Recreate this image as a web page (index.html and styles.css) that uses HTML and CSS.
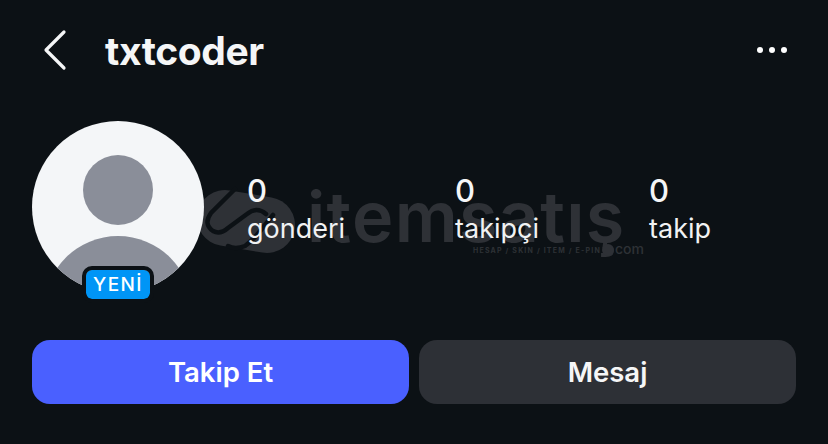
FILE: index.html
```html
<!DOCTYPE html>
<html>
  <head>
    <title>txtcoder</title>
    <link rel="stylesheet" href="styles.css">
  </head>
  <body>
    <div class="page">
      <header class="topbar">
        <svg class="back" width="24" height="42" viewBox="0 0 24 42">
          <path d="M21 3 L3 21 L21 39" fill="none" stroke="#f5f6f7" stroke-width="3.2" stroke-linecap="round" stroke-linejoin="round" />
        </svg>
        <h1 class="username">txtcoder</h1>
        <div class="more">
          <span class="dot"></span>
          <span class="dot"></span>
          <span class="dot"></span>
        </div>
      </header>

      <section class="profile">
        <div class="avatar">
          <svg class="avatar-pic" width="172" height="172" viewBox="0 0 172 172">
            <clipPath id="avatar-clip"><circle cx="86" cy="86" r="86" /></clipPath>
            <g clip-path="url(#avatar-clip)">
              <rect width="172" height="172" fill="#f4f6f8" />
              <circle cx="86" cy="69" r="35" fill="#8a8e99" />
              <circle cx="86" cy="189" r="74" fill="#8a8e99" />
            </g>
          </svg>
          <span class="badge">YENİ</span>
        </div>
        <div class="stats">
          <div class="stat stat-posts"><b>0</b><span>gönderi</span></div>
          <div class="stat stat-followers"><b>0</b><span>takipçi</span></div>
          <div class="stat"><b>0</b><span>takip</span></div>
        </div>
      </section>

      <div class="actions">
        <button class="btn btn-primary">Takip Et</button>
        <button class="btn">Mesaj</button>
      </div>

      <!-- watermark sits behind the stats -->
      <div class="watermark">
        <svg class="wm-logo" width="110" height="80" viewBox="0 0 110 80">
          <path d="M30 38 L72 45" fill="none" stroke="#2e3136" stroke-width="56" stroke-linecap="round" />
          <path d="M40 9 L16 33 Q8 44 18 51 Q25 55 33 48 L52 34 Q62 26 71 34" fill="none" stroke="#0c1115" stroke-width="4.5" stroke-linecap="round" />
          <path d="M78 35 L66 50 Q58 60 50 66 Q40 70 33 66" fill="none" stroke="#0c1115" stroke-width="4.5" stroke-linecap="round" />
        </svg>
        <span class="wm-text">itemsatış</span>
        <span class="wm-sub">HESAP / SKIN / ITEM / E-PIN</span>
        <span class="wm-dot"></span>
        <span class="wm-com">com</span>
      </div>
    </div>
  </body>
</html>
```

FILE: styles.css
```css
* {
  box-sizing: border-box;
}

html,
body {
  margin: 0;
  height: 100%;
}

body {
  background-color: #0c1115;
  color: #f5f6f7;
  font-family: Inter, "Noto Sans", sans-serif;
}

.page {
  position: relative;
  width: 828px;
  height: 444px;
  overflow: hidden;
  padding: 0 32px;
}

.topbar {
  display: flex;
  align-items: center;
  height: 100px;
  position: relative;
  z-index: 1;
}

.back {
  margin-left: 11px;
  flex-shrink: 0;
}

.username {
  margin: 0 0 0 38px;
  font-size: 39px;
  font-weight: 700;
  letter-spacing: -0.4px;
}

.more {
  display: flex;
  gap: 6px;
  margin-left: auto;
  margin-right: 9px;
}

.dot {
  width: 6px;
  height: 6px;
  border-radius: 50%;
  background-color: #fff;
}

.profile {
  display: flex;
  margin-top: 21px;
  height: 182px;
  position: relative;
  z-index: 1;
}

.avatar {
  position: relative;
  width: 172px;
  height: 172px;
  flex-shrink: 0;
}

.avatar-pic {
  display: block;
}

.badge {
  position: absolute;
  left: 50px;
  top: 145px;
  width: 72px;
  height: 37px;
  display: flex;
  align-items: center;
  justify-content: center;
  border: 4px solid #0c1115;
  border-radius: 10px;
  background-color: #0095f6;
  background-clip: padding-box;
  font-size: 19px;
  font-weight: 500;
  letter-spacing: 1.4px;
  color: #fff;
}

.stats {
  display: flex;
  margin-left: 43px;
  padding-top: 50px;
}

.stat {
  display: flex;
  flex-direction: column;
}

.stat b {
  font-size: 31px;
  font-weight: 500;
  line-height: 40px;
}

.stat span {
  font-size: 27px;
  line-height: 36px;
  color: #f1f2f3;
}

.stat-posts {
  width: 208px;
}

.stat-followers {
  width: 194px;
}

.actions {
  display: flex;
  gap: 10px;
  margin-top: 37px;
  position: relative;
  z-index: 1;
}

.btn {
  flex: 1;
  height: 64px;
  border: none;
  border-radius: 18px;
  background-color: #2d3036;
  color: #f5f6f7;
  font-family: inherit;
  font-size: 27.5px;
  font-weight: 600;
}

.btn-primary {
  background-color: #4a60ff;
  color: #fff;
}

.watermark {
  position: absolute;
  left: 195px;
  top: 180px;
  width: 460px;
  height: 85px;
  color: #2e3136;
}

.wm-logo {
  position: absolute;
  left: 0;
  top: 0;
}

.wm-text {
  position: absolute;
  left: 112px;
  top: -3px;
  font-size: 70px;
  font-weight: 600;
  line-height: 80px;
  letter-spacing: 1.3px;
}

.wm-sub {
  position: absolute;
  left: 278px;
  top: 66px;
  font-size: 7px;
  font-weight: 700;
  letter-spacing: 1.2px;
  white-space: nowrap;
}

.wm-dot {
  position: absolute;
  left: 407px;
  top: 64px;
  width: 12px;
  height: 12px;
  border-radius: 50%;
  background-color: #2e3136;
}

.wm-com {
  position: absolute;
  left: 420px;
  top: 60px;
  font-size: 14px;
  line-height: 18px;
  font-weight: 500;
}
```
